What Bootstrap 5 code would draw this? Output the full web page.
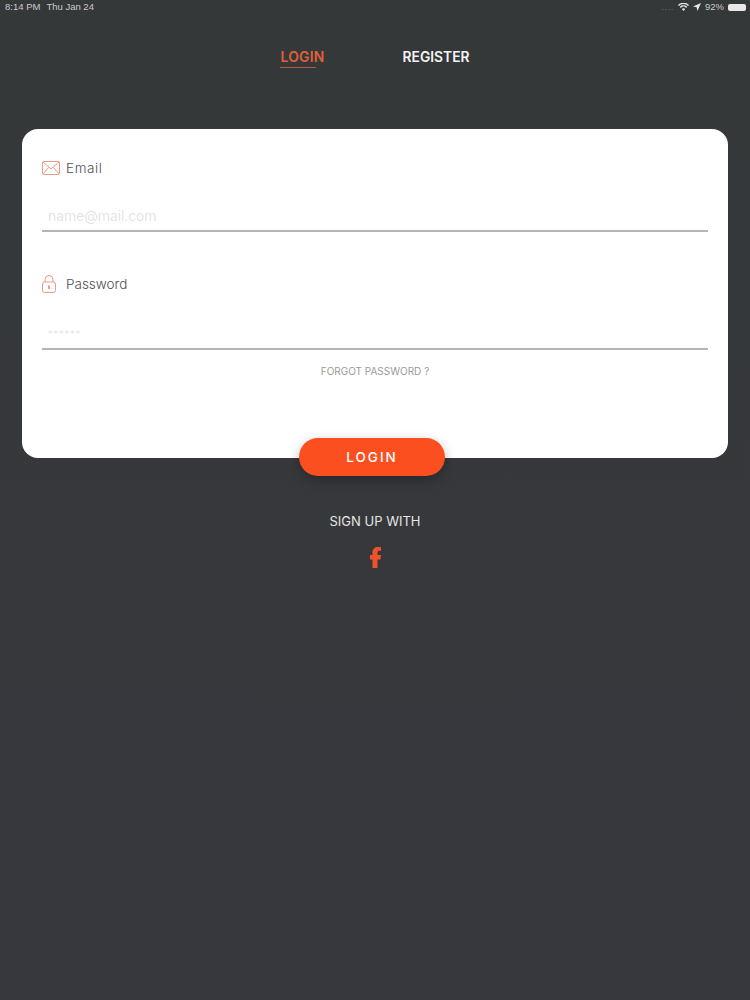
<!DOCTYPE html>
<html lang="en">
<head>
  <meta charset="UTF-8" />
  <meta name="viewport" content="width=device-width, initial-scale=1.0"/>
  <title>Login</title>
  <link href="https://cdn.jsdelivr.net/npm/bootstrap@5.3.3/dist/css/bootstrap.min.css" rel="stylesheet" />
  <style>
    body {
      font-family: "Inter", "Liberation Sans", sans-serif;
      background: linear-gradient(180deg, #353839 0%, #36383c 60%, #37383e 100%);
      min-height: 1000px;
      color: #fff;
    }

    .status-strip {
      height: 14px;
      padding: 0 4px 0 5px;
      font-family: "Liberation Sans", sans-serif;
      font-size: 9.5px;
      line-height: 14px;
      color: #c9cbcb;
    }

    .status-time { gap: 6px; }
    .status-dots { color: #6d7070; letter-spacing: 0.5px; line-height: 14px; }

    .batt-shell {
      width: 18px;
      height: 7px;
      background: #e8e8e8;
      border-radius: 2px;
    }

    .auth-tabs { padding-top: 33px; gap: 78px; height: 47px; }

    .auth-tab {
      font-size: 13.8px;
      font-weight: 600;
      color: #f4f4f4;
      text-decoration: none;
      line-height: 20px;
    }

    .auth-tab-on { color: #e0603a; letter-spacing: 0.3px; }

    .auth-tab-on::after {
      content: "";
      display: block;
      width: 36px;
      height: 1px;
      background: #b9583a;
    }

    .login-panel {
      margin: 68px 22px 0;
      height: 329px;
      background: #fff;
      border-radius: 16px;
      padding: 29px 20px 0;
    }

    .field-label {
      font-size: 13.5px;
      font-weight: 300;
      line-height: 20px;
      color: #4f4f4f;
      gap: 6px;
    }

    .field-label svg { flex: none; }
    .lock-label { gap: 8px; }
    .mail-text { letter-spacing: 0.6px; }

    .field-input {
      border: 0;
      border-bottom: 2px solid #b5b5b5;
      border-radius: 0;
      padding: 2px 6px 0;
      font-size: 14px;
      font-weight: 300;
      box-shadow: none;
      background: transparent;
    }

    .field-input::placeholder { color: #dedede; opacity: 1; }
    .field-input:focus { box-shadow: none; border-color: #b5b5b5; }

    .mail-input { height: 34px; margin-top: 20px; margin-bottom: 42px; }
    .pass-input { height: 32px; margin-top: 24px; padding-top: 0; font-size: 9px; letter-spacing: 1px; }

    .forgot-link {
      display: block;
      margin-top: 14px;
      font-size: 10px;
      line-height: 14px;
      color: #9a9a9a;
      text-decoration: none;
    }

    .login-btn {
      position: relative;
      width: 146px;
      height: 38px;
      margin-top: -20px;
      margin-left: -6px;
      padding-top: 7px;
      background: #fb4f1f;
      border: 0;
      border-radius: 19px;
      color: #fff;
      font-size: 13.5px;
      font-weight: 500;
      letter-spacing: 2px;
      box-shadow: 0 4px 12px rgba(0, 0, 0, 0.28);
    }

    .signup-note {
      margin-top: 36px;
      font-size: 13px;
      line-height: 18px;
      color: #e6e6e6;
    }

    .fb-link { margin-top: 14px; }
  </style>
</head>
<body>

<!-- Status bar -->
<div class="status-strip d-flex justify-content-between">
  <div class="status-time d-flex"><span>8:14 PM</span><span>Thu Jan 24</span></div>
  <div class="d-flex align-items-center gap-1">
    <span class="status-dots">....</span>
    <svg width="11" height="8" viewBox="0 0 11 8"><path d="M5.500 8 3.800 6a2.400 2.400 0 0 1 3.400 0zM2.800 4.900l-1-1.100a5.400 5.400 0 0 1 7.400 0l-1 1.100a3.900 3.900 0 0 0-5.400 0zM.9 2.900 0 1.900a8 8 0 0 1 11 0l-.9 1a6.700 6.700 0 0 0-9.200 0z" fill="#e8e8e8"/></svg>
    <svg width="8" height="8" viewBox="0 0 8 8"><path d="M8 0 0 3.600l3.600.7L4.400 8z" fill="#e8e8e8"/></svg>
    <span>92%</span>
    <div class="batt-shell"></div>
  </div>
</div>

<!-- Tabs -->
<nav class="auth-tabs d-flex justify-content-center align-items-start">
  <a href="#" class="auth-tab auth-tab-on">LOGIN</a>
  <a href="#" class="auth-tab">REGISTER</a>
</nav>

<!-- Form card -->
<form class="d-flex flex-column align-items-center">
  <div class="login-panel align-self-stretch">
    <label class="field-label d-flex align-items-center" for="email">
      <svg width="18" height="14" viewBox="0 0 18 14" fill="none" stroke="#ea9a86" stroke-width="1"><rect x=".5" y=".5" width="17" height="13" rx="1"/><path d="M1 1l8 7 8-7M1 13l5.500-6.500M17 13l-5.500-6.500"/></svg>
      <span class="mail-text">Email</span>
    </label>
    <input id="email" class="form-control field-input mail-input" type="text" placeholder="name@mail.com">

    <label class="field-label lock-label d-flex align-items-center" for="password">
      <svg width="16" height="18" viewBox="0 0 16 18" fill="none" stroke="#ea9a86" stroke-width="1"><rect x=".5" y="7" width="13" height="10.500" rx="2"/><path d="M3 7V4.500a4 4 0 0 1 8 0V7"/><rect x="6" y="10.500" width="2" height="3.500" fill="#ea9a86" stroke="none"/></svg>
      <span>Password</span>
    </label>
    <input id="password" class="form-control field-input pass-input" type="text" placeholder="******">

    <a href="#" class="forgot-link text-center">FORGOT PASSWORD ?</a>
  </div>

  <button type="button" class="btn login-btn">LOGIN</button>

  <div class="signup-note">SIGN UP WITH</div>
  <a href="#" class="fb-link d-block" aria-label="Facebook">
    <svg width="11" height="21" viewBox="0 0 11 21"><path d="M2.500 21V12.500H0V8h2.500V5.500C2.500 2 4.700 0 8 0c1.200 0 2.300.1 3 .2v3.600H9.200C7.900 3.800 7.500 4.500 7.500 5.700V8H11l-.6 4.500H7.500V21z" fill="#f0522a"/></svg>
  </a>
</form>

<script src="https://cdn.jsdelivr.net/npm/bootstrap@5.3.3/dist/js/bootstrap.bundle.min.js"></script>
</body>
</html>
